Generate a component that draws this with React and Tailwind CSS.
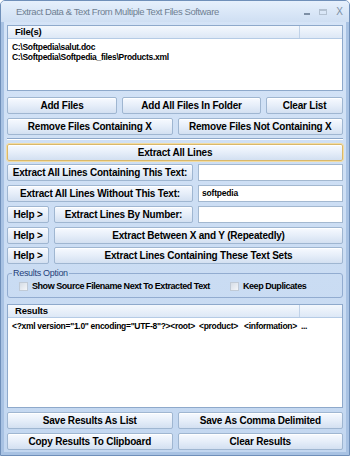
const font = { fontFamily: '"Liberation Sans", Arial, sans-serif' };

function Btn({ children, className = '' }) {
  return (
    <button
      className={`h-[17px] whitespace-nowrap rounded-[2px] border border-[#9fb6d1] bg-gradient-to-b from-[#f7faff] via-[#e6eef9] to-[#d3e0f1] px-0 text-[10px] font-bold leading-none tracking-[-0.2px] text-black shadow-[inset_0_1px_0_#ffffff] ${className}`}
    >
      {children}
    </button>
  );
}

function Input({ value = '' }) {
  return (
    <div className="h-[17px] flex-1 border border-[#a3b8d0] bg-white px-[3px] text-[8.5px] font-bold leading-[15px] tracking-[-0.2px] text-black">
      {value}
    </div>
  );
}

function Check({ label }) {
  return (
    <div className="flex items-center gap-[4px]">
      <span className="h-[9px] w-[9px] shrink-0 border border-[#c0cad6] bg-gradient-to-br from-[#d6dde6] to-[#f4f6f9]" />
      <span className="whitespace-nowrap text-[9px] font-bold tracking-[-0.45px] text-black">{label}</span>
    </div>
  );
}

function Panel({ title, className, children }) {
  return (
    <div className={`flex flex-col border border-[#8ea9cb] bg-white ${className}`}>
      <div className="flex h-[13px] shrink-0 items-center border-b border-[#b5cbe5] bg-gradient-to-b from-[#f4f8fd] to-[#dde8f6]">
        <div className="flex-1 pl-[7px] text-[9.5px] font-bold leading-none tracking-[-0.2px] text-black">{title}</div>
        <div className="h-full w-[43px] border-l border-[#c0d2e8]" />
      </div>
      {children}
    </div>
  );
}

export default function App() {
  return (
    <div
      style={font}
      className="flex h-[456px] w-[350px] flex-col overflow-hidden rounded-t-[5px] border border-[#6f8fb9] bg-gradient-to-b from-[#d5e4f7] to-[#c3d7f0]"
    >
      <div className="flex h-[21px] shrink-0 items-center bg-gradient-to-b from-[#e6f0fc] to-[#cfdff3]">
        <div className="flex-1 whitespace-nowrap pl-[15px] pt-[1px] text-[9.5px] tracking-[-0.4px] text-[#6f7f92]">
          Extract Data &amp; Text From Multiple Text Files Software
        </div>
        <div className="flex items-center gap-[9px] pr-[6px]">
          <span className="mt-[5px] h-[2px] w-[6px] bg-[#7d8fa5]" />
          <span className="h-[6px] w-[8px] border border-t-2 border-[#b3c1d1]" />
          <span className="text-[10px] leading-none text-[#7d8fa5]">X</span>
        </div>
      </div>

      <div className="flex flex-1 flex-col border-x-[3px] border-b-[3px] border-[#a8c2e3] px-[3px] pt-[3px]">
        <Panel title="File(s)" className="h-[66px] shrink-0">
          <div className="px-[4px] pt-[3px] text-[8.5px] font-bold leading-[10px] tracking-[-0.3px] text-black">
            <div>C:\Softpedia\salut.doc</div>
            <div>C:\Softpedia\Softpedia_files\Products.xml</div>
          </div>
        </Panel>

        <div className="mt-[6px] flex gap-[5px]">
          <Btn className="w-[110px]">Add Files</Btn>
          <Btn className="w-[139px]">Add All Files In Folder</Btn>
          <Btn className="flex-1">Clear List</Btn>
        </div>
        <div className="mt-[4px] flex gap-[5px]">
          <Btn className="flex-1">Remove Files Containing X</Btn>
          <Btn className="flex-1">Remove Files Not Containing X</Btn>
        </div>

        <div className="mt-[3px] h-[2px] border-b border-t border-b-white border-t-[#8da7c8]" />

        <Btn className="mt-[4px] w-full border-[#d9b86a] outline outline-1 outline-[#f2dca3]">Extract All Lines</Btn>

        <div className="mt-[3px] flex gap-[5px]">
          <Btn className="w-[186px]">Extract All Lines Containing This Text:</Btn>
          <Input />
        </div>
        <div className="mt-[4px] flex gap-[5px]">
          <Btn className="w-[186px]">Extract All Lines Without This Text:</Btn>
          <Input value="softpedia" />
        </div>
        <div className="mt-[4px] flex gap-[5px]">
          <Btn className="w-[42px]">Help &gt;</Btn>
          <Btn className="w-[139px]">Extract Lines By Number:</Btn>
          <Input />
        </div>
        <div className="mt-[4px] flex gap-[5px]">
          <Btn className="w-[42px]">Help &gt;</Btn>
          <Btn className="flex-1">Extract Between X and Y (Repeatedly)</Btn>
        </div>
        <div className="mt-[3px] flex gap-[5px]">
          <Btn className="w-[42px]">Help &gt;</Btn>
          <Btn className="flex-1">Extract Lines Containing These Text Sets</Btn>
        </div>

        <div className="relative mt-[9px] h-[25px] shrink-0 rounded-[3px] border border-[#92acd0]">
          <span className="absolute -top-[7px] left-[4px] bg-[#cadcf2] px-[1px] text-[9px] leading-[12px] tracking-[-0.3px] text-[#1f3f7a]">
            Results Option
          </span>
          <div className="flex h-full items-center pl-[11px] pt-[2px]">
            <div className="w-[211px]">
              <Check label="Show Source Filename Next To Extracted Text" />
            </div>
            <Check label="Keep Duplicates" />
          </div>
        </div>

        <Panel title="Results" className="mt-[6px] h-[104px] shrink-0">
          <div className="whitespace-pre px-[4px] pt-[3px] text-[8.5px] font-bold leading-[10px] tracking-[-0.3px] text-black">
            {'<?xml version="1.0" encoding="UTF-8"?><root>  <product>   <information>  ...'}
          </div>
        </Panel>

        <div className="mt-[4px] flex gap-[5px]">
          <Btn className="flex-1">Save Results As List</Btn>
          <Btn className="flex-1">Save As Comma Delimited</Btn>
        </div>
        <div className="mt-[4px] flex gap-[5px]">
          <Btn className="flex-1">Copy Results To Clipboard</Btn>
          <Btn className="flex-1">Clear Results</Btn>
        </div>
      </div>
    </div>
  );
}
